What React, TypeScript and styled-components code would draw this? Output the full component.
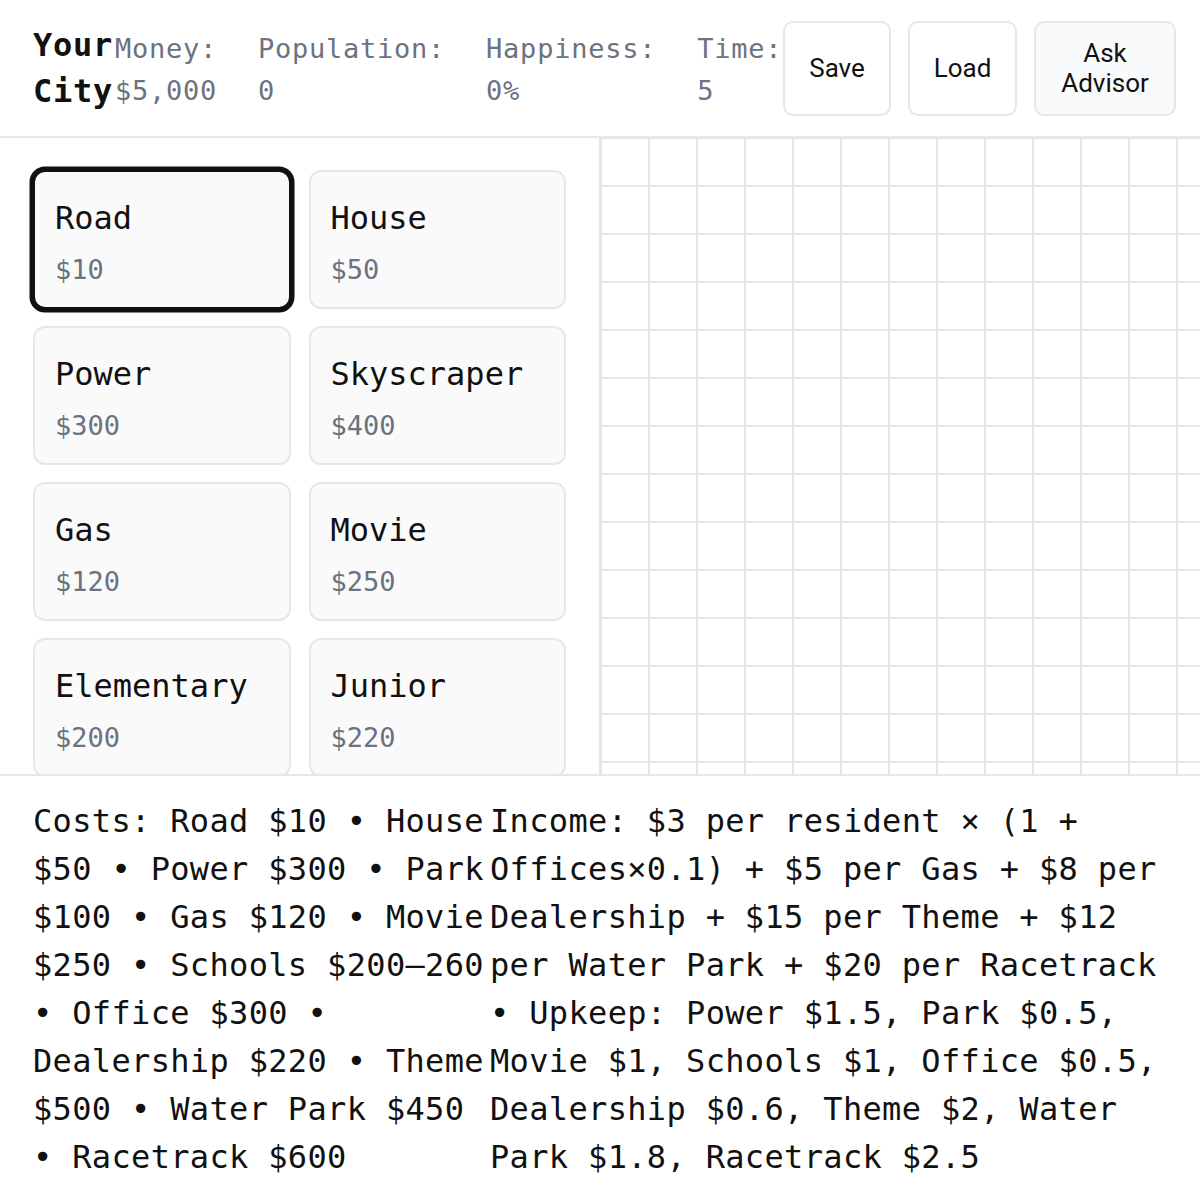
import React from "react";
import styled, { createGlobalStyle, css } from "styled-components";

const MONO = `"DejaVu Sans Mono", "Liberation Mono", monospace`;
const SANS = `Roboto, "Noto Sans", Arial, sans-serif`;
const LINE = "#e5e7eb";
const INK = "#111111";
const MUTED = "#6b7280";

const GlobalStyle = createGlobalStyle`
  *, *::before, *::after { box-sizing: border-box; }
  html, body { margin: 0; padding: 0; background: #ffffff; }
  body { font-family: ${MONO}; color: ${INK}; }
`;

const Page = styled.div`
  display: flex;
  flex-direction: column;
  height: 100vh;
  overflow: hidden;
`;

const Header = styled.header`
  flex: none;
  display: flex;
  align-items: center;
  height: 138px;
  padding: 0 24px 0 33px;
  border-bottom: 2px solid ${LINE};
`;

const Title = styled.h1`
  flex: none;
  width: 82px;
  margin: 0;
  font-family: ${MONO};
  font-size: 32px;
  font-weight: 700;
  letter-spacing: 0.7px;
  line-height: 46px;
  color: ${INK};
`;

const Stats = styled.div`
  flex: none;
  display: flex;
  gap: 41px;
  padding-top: 4px;
`;

const Stat = styled.div`
  display: flex;
  flex-direction: column;
  font-family: ${MONO};
  font-size: 27px;
  letter-spacing: 0.75px;
  line-height: 42px;
  color: ${MUTED};
  white-space: nowrap;
`;

const Actions = styled.div`
  flex: none;
  display: flex;
  gap: 17px;
  margin-left: auto;
`;

const ActionButton = styled.button<{ $width: number; $muted?: boolean }>`
  width: ${(p) => p.$width}px;
  height: 95px;
  padding: 0 20px;
  border: 2px solid ${LINE};
  border-radius: 10px;
  background: ${(p) => (p.$muted ? "#f9fafb" : "#ffffff")};
  font-family: ${SANS};
  font-size: 26px;
  line-height: 30px;
  color: ${INK};
  cursor: pointer;
`;

const Main = styled.main`
  flex: 1;
  min-height: 0;
  display: flex;
`;

const Palette = styled.aside`
  flex: none;
  width: 601px;
  overflow: hidden;
  border-right: 2px solid ${LINE};
  padding: 32px 33px 0 33px;
`;

const ToolGrid = styled.div`
  display: grid;
  grid-template-columns: 1fr 1fr;
  column-gap: 18px;
  row-gap: 17px;
`;

const ToolCard = styled.button<{ $selected?: boolean }>`
  display: flex;
  flex-direction: column;
  align-items: flex-start;
  gap: 8px;
  padding: 22px 20px 18px;
  border: 2px solid ${LINE};
  border-radius: 12px;
  background: #fafafa;
  text-align: left;
  cursor: pointer;
  ${(p) =>
    p.$selected &&
    css`
      border-color: ${INK};
      box-shadow: 0 0 0 3.5px ${INK};
    `}
`;

const ToolName = styled.span`
  font-family: ${MONO};
  font-size: 32px;
  line-height: 48px;
  color: ${INK};
`;

const ToolPrice = styled.span`
  font-family: ${MONO};
  font-size: 27px;
  line-height: 39px;
  color: ${MUTED};
`;

const Board = styled.section`
  flex: 1;
  min-width: 0;
  overflow: hidden;
  background: #ffffff;
`;

const BoardGrid = styled.div<{ $cols: number }>`
  display: grid;
  grid-template-columns: repeat(${(p) => p.$cols}, 48px);
  grid-auto-rows: 48px;
  width: max-content;
`;

const Cell = styled.div`
  border: 1px solid ${LINE};
  background: #ffffff;
`;

const Footer = styled.footer`
  flex: none;
  height: 426px;
  border-top: 2px solid ${LINE};
  padding: 21px 32px 19px 33px;
  display: grid;
  grid-template-columns: 457px 1fr;
  font-family: ${MONO};
  font-size: 32px;
  letter-spacing: 0.34px;
  line-height: 48px;
  color: ${INK};
`;

const Note = styled.p`
  margin: 0;
`;

const tools = [
  { name: "Road", price: 10 },
  { name: "House", price: 50 },
  { name: "Power", price: 300 },
  { name: "Skyscraper", price: 400 },
  { name: "Gas", price: 120 },
  { name: "Movie", price: 250 },
  { name: "Elementary", price: 200 },
  { name: "Junior", price: 220 },
  { name: "High", price: 260 },
  { name: "Park", price: 100 },
  { name: "Office", price: 300 },
  { name: "Dealership", price: 220 },
];

const COLS = 20;
const ROWS = 20;

export default function App() {
  const [selected, setSelected] = React.useState("Road");
  const cells = Array.from({ length: COLS * ROWS }, (_, i) => i);

  return (
    <>
      <GlobalStyle />
      <Page>
        <Header>
          <Title>Your City</Title>
          <Stats>
            <Stat>
              <span>Money:</span>
              <span>$5,000</span>
            </Stat>
            <Stat>
              <span>Population:</span>
              <span>0</span>
            </Stat>
            <Stat>
              <span>Happiness:</span>
              <span>0%</span>
            </Stat>
            <Stat>
              <span>Time:</span>
              <span>5</span>
            </Stat>
          </Stats>
          <Actions>
            <ActionButton $width={108}>Save</ActionButton>
            <ActionButton $width={109}>Load</ActionButton>
            <ActionButton $width={142} $muted>
              Ask Advisor
            </ActionButton>
          </Actions>
        </Header>

        <Main>
          <Palette>
            <ToolGrid>
              {tools.map((t) => (
                <ToolCard
                  key={t.name}
                  $selected={t.name === selected}
                  onClick={() => setSelected(t.name)}
                >
                  <ToolName>{t.name}</ToolName>
                  <ToolPrice>${t.price}</ToolPrice>
                </ToolCard>
              ))}
            </ToolGrid>
          </Palette>
          <Board>
            <BoardGrid $cols={COLS}>
              {cells.map((i) => (
                <Cell key={i} />
              ))}
            </BoardGrid>
          </Board>
        </Main>

        <Footer>
          <Note>
            Costs: Road $10 • House $50 • Power $300 • Park $100 • Gas $120 •
            Movie $250 • Schools $200–260 • Office $300 • Dealership $220 •
            Theme $500 • Water Park $450 • Racetrack $600
          </Note>
          <Note>
            Income: $3 per resident × (1 + Offices×0.1) + $5 per Gas + $8 per
            Dealership + $15 per Theme + $12 per Water Park + $20 per Racetrack
            • Upkeep: Power $1.5, Park $0.5, Movie $1, Schools $1, Office $0.5,
            Dealership $0.6, Theme $2, Water Park $1.8, Racetrack $2.5
          </Note>
        </Footer>
      </Page>
    </>
  );
}
